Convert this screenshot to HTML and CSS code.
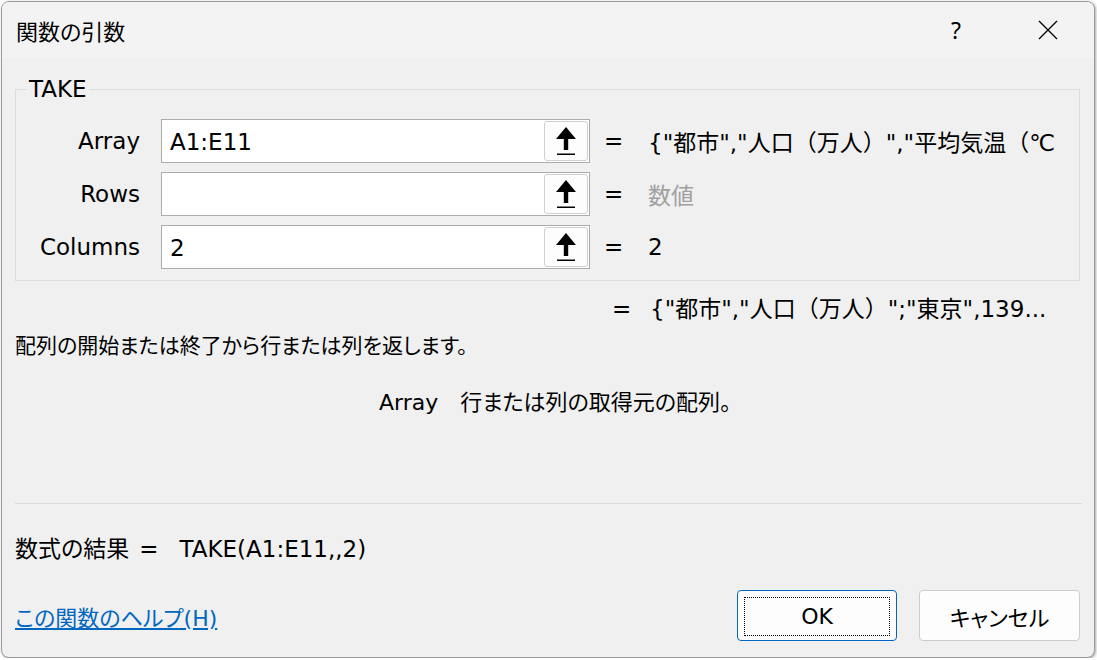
FILE: index.html
```html
<!DOCTYPE html>
<html lang="ja">
<head>
  <meta charset="utf-8">
  <title>関数の引数</title>
  <link rel="stylesheet" href="styles.css">
</head>
<body>
  <div class="dialog">
    <div class="titlebar">
      <span class="title">関数の引数</span>
      <span class="caption-btn help">?</span>
      <span class="caption-btn close">
        <svg width="20" height="20" viewBox="0 0 20 20"><path d="M1 1 L19 19 M19 1 L1 19" stroke="#000" stroke-width="1.3" fill="none"/></svg>
      </span>
    </div>

    <div class="content">
      <fieldset class="group">
        <legend>TAKE</legend>

        <div class="arg-row">
          <label class="arg-label">Array</label>
          <div class="field">
            <span class="field-text">A1:E11</span>
            <span class="ref-btn">
              <svg width="20" height="28" viewBox="0 0 20 28"><path d="M10 0 L20 12 L12.2 12 L12.2 23 L7.8 23 L7.8 12 L0 12 Z" fill="#000"/><rect x="1" y="26.5" width="18" height="1.5" fill="#000"/></svg>
            </span>
          </div>
          <span class="eq">=</span>
          <span class="val">{"都市","人口（万人）","平均気温（℃</span>
        </div>

        <div class="arg-row">
          <label class="arg-label">Rows</label>
          <div class="field">
            <span class="field-text"></span>
            <span class="ref-btn">
              <svg width="20" height="28" viewBox="0 0 20 28"><path d="M10 0 L20 12 L12.2 12 L12.2 23 L7.8 23 L7.8 12 L0 12 Z" fill="#000"/><rect x="1" y="26.5" width="18" height="1.5" fill="#000"/></svg>
            </span>
          </div>
          <span class="eq">=</span>
          <span class="val hint">数値</span>
        </div>

        <div class="arg-row">
          <label class="arg-label">Columns</label>
          <div class="field">
            <span class="field-text">2</span>
            <span class="ref-btn">
              <svg width="20" height="28" viewBox="0 0 20 28"><path d="M10 0 L20 12 L12.2 12 L12.2 23 L7.8 23 L7.8 12 L0 12 Z" fill="#000"/><rect x="1" y="26.5" width="18" height="1.5" fill="#000"/></svg>
            </span>
          </div>
          <span class="eq">=</span>
          <span class="val">2</span>
        </div>
      </fieldset>

      <div class="result-row">
        <span class="eq">=</span>
        <span class="val">{"都市","人口（万人）";"東京",139...</span>
      </div>

      <p class="desc">配列の開始または終了から行または列を返します。</p>

      <p class="arg-help"><span class="arg-name">Array</span>行または列の取得元の配列。</p>

      <div class="separator"></div>

      <p class="formula"><span>数式の結果</span><span class="formula-eq">=</span><span>TAKE(A1:E11,,2)</span></p>

      <div class="footer">
        <a href="#" class="help-link">この関数のヘルプ(H)</a>
        <div class="buttons">
          <button class="btn btn-ok"><span class="focus">OK</span></button>
          <button class="btn">キャンセル</button>
        </div>
      </div>
    </div>
  </div>
</body>
</html>
```

FILE: styles.css
```css
html, body {
  margin: 0;
  padding: 0;
}

body {
  background-color: #fff;
  font-family: "DejaVu Sans", "Noto Sans CJK JP", sans-serif;
  font-size: 23px;
  font-feature-settings: "palt";
  color: #000;
}

.dialog {
  box-sizing: border-box;
  width: 1094px;
  height: 657px;
  margin: 1px 0 0 1px;
  border: 1px solid #9a9a9a;
  border-radius: 8px;
  background-color: #f0f0f0;
  box-shadow: 1px 1px 3px rgba(0, 0, 0, 0.35);
  overflow: hidden;
}

.titlebar {
  display: flex;
  align-items: center;
  height: 56px;
  background-color: #f3f3f3;
}

.title {
  flex: 1;
  padding-left: 14px;
  font-family: "Noto Sans CJK JP", sans-serif;
  font-size: 22px;
}

.caption-btn {
  display: flex;
  align-items: center;
  justify-content: center;
  width: 92px;
  height: 56px;
}

.help {
  font-family: "Noto Sans", sans-serif;
  font-size: 23px;
}

.content {
  padding: 0 14px 0 13px;
}

.group {
  margin: 16px 0 0 0;
  padding: 15px 0 11px 0;
  border: 1px solid #dcdcdc;
  min-width: 0;
}

.group legend {
  margin-left: 11px;
  padding: 0 2px;
  line-height: 30px;
}

.arg-row {
  display: flex;
  align-items: center;
  height: 44px;
  margin-bottom: 9px;
}

.arg-row:last-child {
  margin-bottom: 0;
}

.arg-label {
  width: 124px;
  margin-right: 21px;
  text-align: right;
}

.field {
  box-sizing: border-box;
  display: flex;
  width: 429px;
  height: 44px;
  border: 1px solid #acacac;
  background-color: #fff;
}

.field-text {
  flex: 1;
  padding-left: 8px;
  line-height: 44px;
}

.ref-btn {
  box-sizing: border-box;
  display: flex;
  align-items: center;
  justify-content: center;
  width: 44px;
  height: 40px;
  margin: 1px;
  border: 1px solid #d0d0d0;
  border-radius: 3px;
  background-color: #fdfdfd;
}

.eq {
  width: 44px;
  margin-left: 14px;
}

.val {
  flex: 1;
  white-space: nowrap;
  overflow: hidden;
  font-feature-settings: normal;
}

.hint {
  color: #a0a0a0;
}

.result-row {
  display: flex;
  margin: 13px 0 0 589px;
  line-height: 30px;
}

.result-row .eq {
  margin-left: 8px;
  width: 38px;
}

.desc {
  margin: 7px 0 0 0;
  line-height: 30px;
  font-size: 21px;
}

.arg-help {
  margin: 27px 0 0 364px;
  line-height: 30px;
  font-size: 22px;
}

.arg-name {
  margin-right: 22px;
}

.separator {
  height: 1px;
  margin: 85px -2px 0 0;
  background-color: #dadada;
}

.formula {
  margin: 30px 0 0 0;
  line-height: 30px;
}

.formula-eq {
  margin: 0 21px 0 10px;
}

.footer {
  display: flex;
  align-items: center;
  justify-content: space-between;
  margin-top: 26px;
}

.help-link {
  color: #0067c0;
  text-decoration: underline;
  font-size: 22px;
}

.buttons {
  display: flex;
  gap: 22px;
}

.btn {
  box-sizing: border-box;
  width: 161px;
  height: 51px;
  padding: 0;
  border: 1px solid #cccccc;
  border-radius: 4px;
  background-color: #fdfdfd;
  font-family: "DejaVu Sans", "Noto Sans CJK JP", sans-serif;
  font-size: 22px;
  font-feature-settings: "palt";
  color: #000;
}

.btn-ok {
  width: 160px;
  padding: 6px;
  border-color: #0067c0;
}

.focus {
  display: flex;
  align-items: center;
  justify-content: center;
  height: 100%;
  border: 1px dotted #000;
}
```
